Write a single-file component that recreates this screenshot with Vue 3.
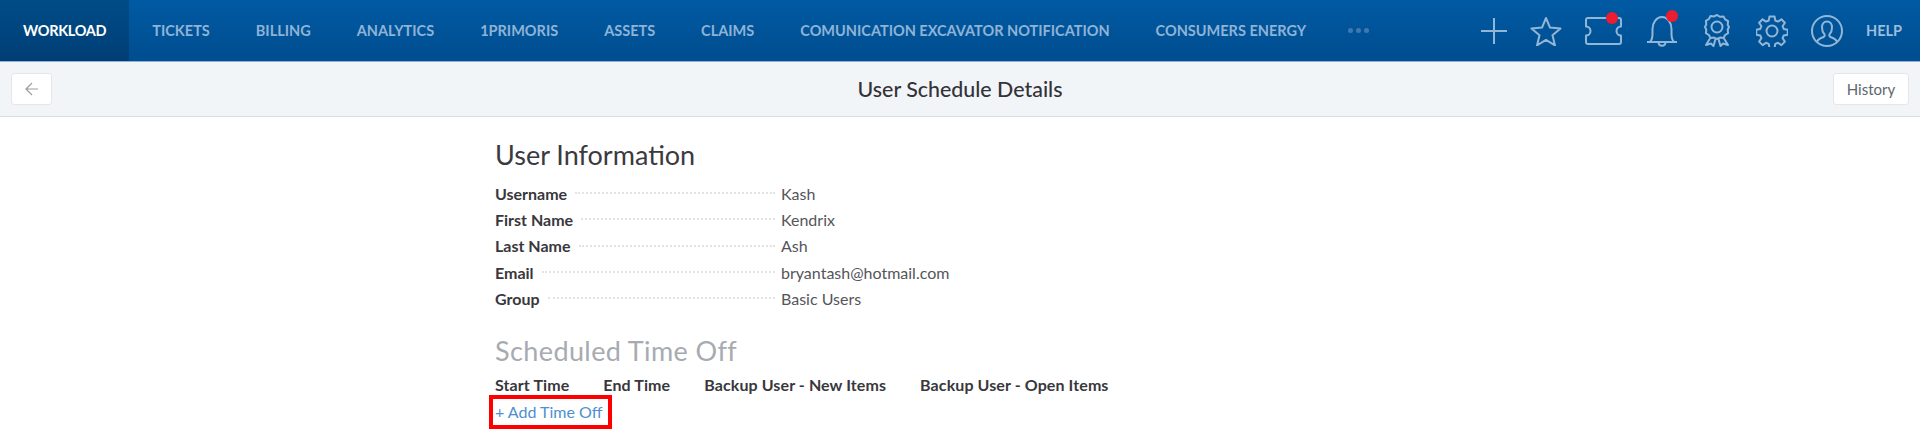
<script setup>
const navItems = ['TICKETS','BILLING','ANALYTICS','1PRIMORIS','ASSETS','CLAIMS','COMUNICATION EXCAVATOR NOTIFICATION','CONSUMERS ENERGY']
const info = [
  ['Username','Kash'],
  ['First Name','Kendrix'],
  ['Last Name','Ash'],
  ['Email','bryantash@hotmail.com'],
  ['Group','Basic Users'],
]
const cols = ['Start Time','End Time','Backup User - New Items','Backup User - Open Items']
</script>

<template>
  <div class="page">
    <header class="topbar">
      <nav class="nav">
        <a class="tab active">WORKLOAD</a>
        <a v-for="n in navItems" :key="n" class="tab">{{ n }}</a>
        <span class="more"><i></i><i></i><i></i></span>
      </nav>
      <div class="tools">
        <svg class="ic plus" width="26" height="26" viewBox="0 0 26 26"><path d="M13 0v26M0 13h26"/></svg>
        <svg class="ic star" width="32" height="30" viewBox="0 0 32 30"><path d="M16 2l4 9.600 10.500.8-8 6.800 2.500 10.200L16 23.900 7 29.400l2.500-10.200-8-6.800 10.500-.8z"/></svg>
        <span class="badged ticket">
          <svg class="ic" width="37" height="28" viewBox="0 0 37 28"><path d="M3 1h31a2 2 0 0 1 2 2v6.500a4.500 4.500 0 0 0 0 9V25a2 2 0 0 1-2 2H3a2 2 0 0 1-2-2v-6.500a4.500 4.500 0 0 0 0-9V3a2 2 0 0 1 2-2z"/></svg>
          <b class="dot"></b>
        </span>
        <span class="badged bell">
          <svg class="ic" width="32" height="32" viewBox="0 0 32 32"><path d="M1 27h30M4 27c2-2 2.500-4 2.500-8v-5C6.500 7.500 10.500 2 16 2s9.500 5.500 9.500 12v5c0 4 .5 6 2.500 8M12.500 27c0 5 7 5 7 0"/></svg>
          <b class="dot"></b>
        </span>
        <svg class="ic ribbon" width="26" height="33" viewBox="0 0 26 33"><path d="M13 1l3 1.800 3.500-.4 1.600 3 3 1.800-.4 3.500L25 13l-1.300 2.700.4 3.500-3 1.800-1.600 3-3.500-.4L13 25l-3-1.400-3.500.4-1.600-3-3-1.800.4-3.500L1 13l1.300-2.700-.4-3.500 3-1.800 1.600-3 3.500.4z"/><circle cx="13" cy="13" r="5.500"/><path d="M6 24.500L2 31l5-1.500L9.500 32l2-7M20 24.500l4 6.500-5-1.500-2.500 2.500-2-7"/></svg>
        <svg class="ic gear" width="32" height="32" viewBox="0 0 32 32"><circle cx="16" cy="16" r="5.500"/><path d="M13.500 1.500h5l.8 4 2.700 1.100 3.400-2.300 3.500 3.500-2.300 3.400 1.100 2.700 4 .8v5l-4 .8-1.100 2.700 2.300 3.400-3.500 3.500-3.400-2.300-2.700 1.100-.8 4h-5l-.8-4-2.700-1.100-3.400 2.300-3.500-3.500 2.300-3.400-1.100-2.700-4-.8v-5l4-.8 1.100-2.700-2.300-3.400 3.500-3.500 3.400 2.300 2.700-1.100z"/></svg>
        <svg class="ic user" width="32" height="32" viewBox="0 0 32 32"><circle cx="16" cy="16" r="15"/><path d="M6 27c1-3.500 4-4 6.500-5 1.500-.6 1.500-2 .8-3-1.500-1.500-2.300-4-2.300-6.500C11 9 13 6.500 16 6.500s5 2.500 5 6c0 2.500-.8 5-2.300 6.500-.7 1-.7 2.400.8 3 2.500 1 5.500 1.500 6.500 5"/></svg>
        <a class="help">HELP</a>
      </div>
    </header>

    <div class="toolbar">
      <div class="side">
        <button class="btn back" aria-label="Back">
          <svg width="14" height="14" viewBox="0 0 14 14"><path d="M13 7H1M7 1L1 7l6 6"/></svg>
        </button>
      </div>
      <h1>User Schedule Details</h1>
      <div class="side end">
        <button class="btn history">History</button>
      </div>
    </div>

    <main class="content">
      <h2>User Information</h2>
      <dl class="info">
        <div v-for="r in info" :key="r[0]" class="row">
          <dt><span>{{ r[0] }}</span><i class="leader"></i></dt>
          <dd>{{ r[1] }}</dd>
        </div>
      </dl>
      <h2 class="muted">Scheduled Time Off</h2>
      <div class="cols">
        <span v-for="c in cols" :key="c">{{ c }}</span>
      </div>
      <a class="add">+ Add Time Off</a>
    </main>
  </div>
</template>

<style>
html, body { margin: 0; background: #fff; }
</style>

<style scoped>
.page {
  height: 441px;
  overflow: hidden;
  font-family: "Lato", "Open Sans", sans-serif;
  color: #3a3a3f;
}
.topbar {
  height: 61px;
  display: flex;
  justify-content: space-between;
  background: linear-gradient(#005aa3, #004d8f);
  border-bottom: 1px solid #8fb2d4;
}
.nav { display: flex; align-items: stretch; }
.tab {
  display: flex;
  align-items: center;
  padding: 0 23px;
  font-size: 14.500px;
  font-weight: 700;
  color: #8fb3d6;
  white-space: nowrap;
}
.tab.active {
  color: #fff;
  letter-spacing: -0.300px;
  background: linear-gradient(#004c88, #003e75);
}
.more { display: flex; align-items: center; gap: 3px; margin-left: 19px; }
.more i { width: 5px; height: 5px; border-radius: 50%; background: #3f79ad; }
.tools {
  display: flex;
  align-items: center;
  padding-right: 18px;
}
.ic {
  display: block;
  fill: none;
  stroke: #92b6d6;
  stroke-width: 2;
  stroke-linejoin: round;
}
.plus { margin-right: 23px; }
.star { margin-right: 23px; }
.badged { position: relative; display: block; }
.ticket { margin-right: 24px; }
.bell { margin-right: 26px; }
.ribbon { margin-right: 26px; }
.gear { margin-right: 23px; }
.user { margin-right: 23px; }
.dot {
  position: absolute;
  width: 12px;
  height: 12px;
  border-radius: 50%;
  background: #ed1c2e;
}
.ticket .dot { top: -5px; left: 21px; }
.bell .dot { top: -5px; left: 20px; }
.help { font-size: 14.500px; font-weight: 700; color: #9dbddb; }
.toolbar {
  height: 54px;
  display: grid;
  grid-template-columns: 1fr auto 1fr;
  align-items: center;
  padding: 0 11px;
  background: #f2f5f8;
  border-bottom: 1px solid #dcdde3;
}
.side { display: flex; }
.side.end { justify-content: flex-end; }
.toolbar h1 {
  margin: 0;
  font-size: 21.400px;
  font-weight: 500;
  color: #333338;
}
.btn {
  height: 32px;
  box-sizing: border-box;
  background: #fff;
  border: 1px solid #e4e6ea;
  border-radius: 3px;
  font-family: inherit;
  font-size: 15px;
  color: #5e6670;
  padding: 0;
}
.back { width: 41px; display: flex; align-items: center; justify-content: center; }
.back svg { fill: none; stroke: #9a9ea3; stroke-width: 1.200; }
.history { width: 76px; }
.content { padding: 22px 0 0 495px; }
h2 {
  margin: 0;
  font-size: 27px;
  line-height: 32px;
  font-weight: 400;
  color: #3a3a3f;
}
.info { margin: 9px 0 0; width: 500px; }
.row { display: flex; height: 26.300px; align-items: center; font-size: 16px; }
dt {
  flex: none;
  width: 286px;
  display: flex;
  align-items: center;
  gap: 8px;
  font-weight: 700;
  color: #38383c;
}
.leader {
  flex: 1;
  margin-right: 6px;
  border-bottom: 2px dotted #e2e3e6;
}
dd { margin: 0; color: #55555a; white-space: nowrap; }
.muted { margin-top: 24px; color: #a7abb1; letter-spacing: 0.400px; }
.cols {
  display: flex;
  gap: 34px;
  margin-top: 8px;
  font-size: 16px;
  letter-spacing: 0.100px;
  font-weight: 700;
  line-height: 20px;
  color: #38383c;
}
.add {
  display: block;
  width: 113px;
  margin: 0 0 0 -6px;
  padding: 0 0 0 2px;
  border: 4px solid #f00;
  font-size: 16px;
  line-height: 26px;
  color: #4d8fd0;
  white-space: nowrap;
}
</style>
